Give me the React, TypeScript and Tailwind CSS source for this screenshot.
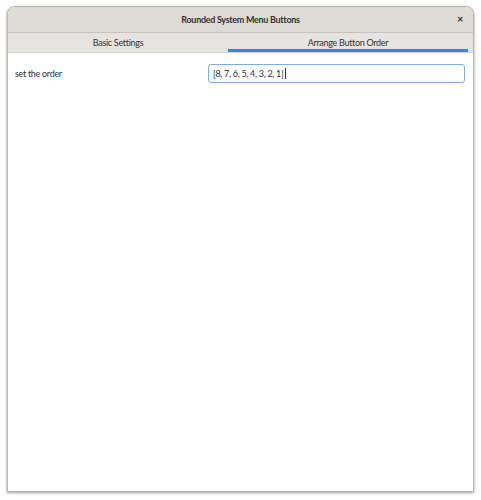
export default function App() {
  return (
    <div className="w-[481px] h-[500px] bg-white pt-[6px] pl-[7px] font-['Lato',sans-serif] tracking-[-0.3px]">
      <div className="w-[467px] h-[486px] rounded-t-[8px] border border-[#b8b6b3] bg-white shadow-[0_1px_3px_rgba(0,0,0,0.4)] flex flex-col overflow-hidden">
        <div className="h-[26px] bg-[#dedbd7] border-b border-[#c6c3bf] flex items-center relative">
          <div className="flex-1 text-center text-[9px] font-bold text-[#2e3436]">Rounded System Menu Buttons</div>
          <div className="absolute right-[10px] top-[6px] text-[11px] font-bold text-[#2e3436] leading-none">×</div>
        </div>
        <div className="h-[20px] bg-[#e6e4e1] flex pl-px border-b border-[#d8d5d1]">
          <div className="w-[218px] flex items-center justify-center text-[9px] text-[#2e3436]">Basic Settings</div>
          <div className="w-[240px] ml-px flex items-center justify-center text-[9px] text-[#2e3436] border-b-[3px] border-[#3584e4] pt-[3px]">Arrange Button Order</div>
        </div>
        <div className="flex items-center justify-between pl-[7px] pr-[8px] pt-[11px]">
          <span className="text-[9px] text-[#2e3436]">set the order</span>
          <div className="w-[257px] h-[19px] rounded-[3px] border border-[#7eaee9] flex items-center px-[4px] text-[9px] text-[#2e3436]">
            [8, 7, 6, 5, 4, 3, 2, 1]<span className="w-px h-[11px] bg-[#2e3436] ml-px"></span>
          </div>
        </div>
      </div>
    </div>
  );
}
